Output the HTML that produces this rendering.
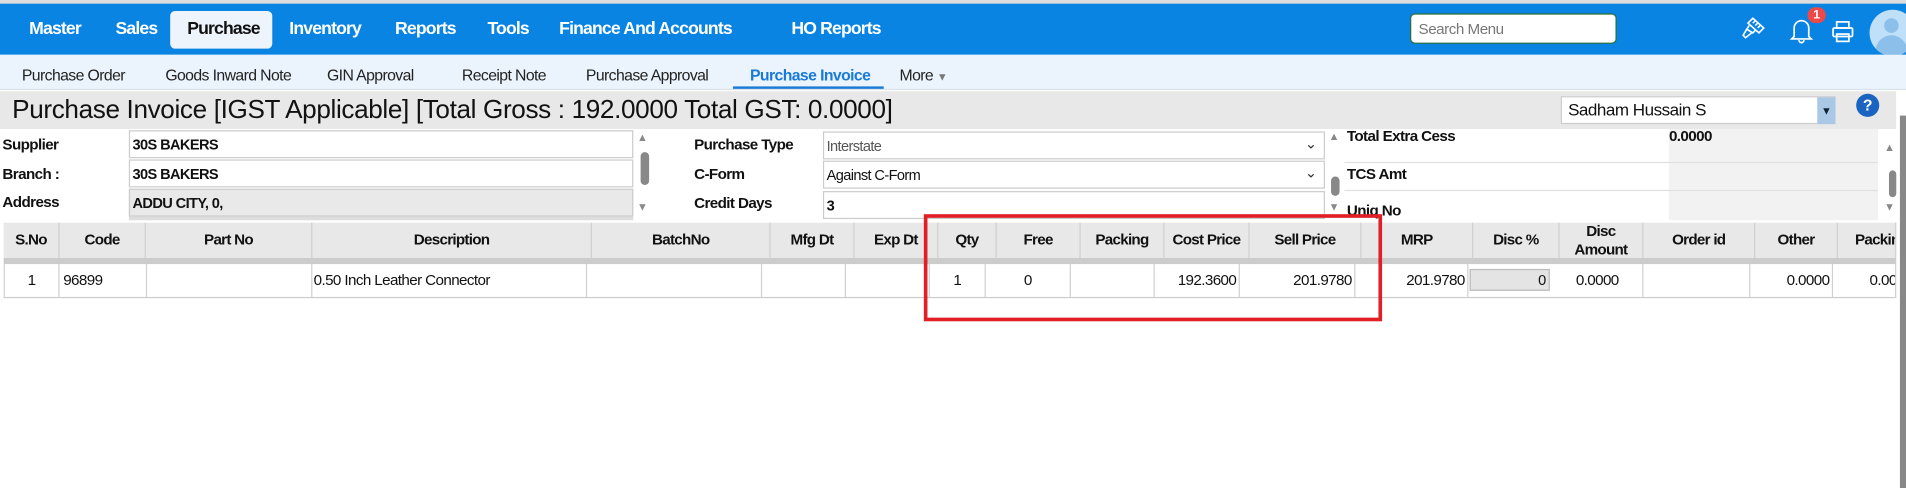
<!DOCTYPE html>
<html><head><meta charset="utf-8"><style>
*{box-sizing:border-box;margin:0;padding:0}
html,body{width:1906px;height:488px;overflow:hidden;background:#fff}
#w{position:absolute;left:0;top:0;width:1568px;height:401px;transform:scale(1.21556,1.21696);transform-origin:0 0;font-family:"Liberation Sans",sans-serif;color:#111}
.a{position:absolute;white-space:nowrap}
.nav{left:0;top:3px;width:1568px;height:42px;background:#0a84e3}
.ni{color:#fff;font-weight:bold;font-size:14.5px;top:16px;letter-spacing:-0.7px}
.sub{left:0;top:45px;width:1568px;height:29px;background:#ebf4fc;border-bottom:1px solid #d8e2ea}
.si{font-size:13px;top:54px;color:#222;letter-spacing:-0.5px}
.lbl{font-size:12.5px;font-weight:bold;letter-spacing:-0.5px}
.inp{border:1px solid #ccc;background:#fff;font-size:12px;font-weight:bold;padding:4px 0 0 2px;letter-spacing:-0.5px}
.th{position:absolute;top:183px;height:29px;border-right:1px solid #d0d0d0;font-size:12.5px;font-weight:bold;text-align:center;line-height:29px;letter-spacing:-0.6px}
.td{position:absolute;top:217px;height:27px;border-right:1px solid #d0d0d0;font-size:12.5px;line-height:27px;letter-spacing:-0.5px}
</style></head><body><div id="w">
<div class="a" style="left:0;top:0;width:1568px;height:3px;background:#ddd"></div>
<div class="a nav"></div>
<div class="a" style="left:140px;top:9px;width:84px;height:31px;background:#eef4fb;border-radius:4px"></div>
<div class="a ni" style="left:24px">Master</div>
<div class="a ni" style="left:95px">Sales</div>
<div class="a ni" style="left:154px;color:#111">Purchase</div>
<div class="a ni" style="left:238px">Inventory</div>
<div class="a ni" style="left:325px">Reports</div>
<div class="a ni" style="left:401px">Tools</div>
<div class="a ni" style="left:460px">Finance And Accounts</div>
<div class="a ni" style="left:651px">HO Reports</div>
<div class="a" style="left:1160px;top:11px;width:170px;height:25px;background:#fff;border:1px solid #2b6e3a;border-radius:4px;font-size:12.5px;color:#777;padding:5px 0 0 6px;letter-spacing:-0.4px">Search Menu</div>
<svg class="a" style="left:1432px;top:12px" width="22" height="24" viewBox="0 0 22 24" fill="none" stroke="#fff" stroke-width="1.3"><path d="M10 3l9 8-4 4-9-8z"/><path d="M12 5l-2 2M14 7l-2 2M16 9l-2 2"/><path d="M7 9l-2 3 5 3 2-2"/><path d="M5 12l-3 5 2 2 5-4"/></svg>
<svg class="a" style="left:1472px;top:14px" width="20" height="22" viewBox="0 0 20 22" fill="none" stroke="#fff" stroke-width="1.4"><path d="M4 16V9a6 6 0 0112 0v7l2 2H2z"/><path d="M8 19a2 2 0 004 0"/></svg>
<div class="a" style="left:1487px;top:6px;width:15px;height:13px;border-radius:7px;background:#f04848;color:#fff;font-size:10px;font-weight:bold;text-align:center;line-height:13px">1</div>
<svg class="a" style="left:1506px;top:16px" width="20" height="20" viewBox="0 0 20 20" fill="none" stroke="#fff" stroke-width="1.4"><rect x="5" y="2" width="10" height="5"/><rect x="2" y="7" width="16" height="7" rx="1"/><rect x="5" y="12" width="10" height="6"/></svg>
<div class="a" style="left:1538px;top:8px;width:38px;height:38px;border-radius:50%;background:#bfe0f8;overflow:hidden"><div class="a" style="left:12px;top:7px;width:12px;height:12px;border-radius:50%;background:#8cc0ea"></div><div class="a" style="left:5px;top:21px;width:26px;height:20px;border-radius:13px 13px 0 0;background:#8cc0ea"></div></div>
<div class="a sub"></div>
<div class="a si" style="left:18px">Purchase Order</div>
<div class="a si" style="left:136px">Goods Inward Note</div>
<div class="a si" style="left:269px">GIN Approval</div>
<div class="a si" style="left:380px">Receipt Note</div>
<div class="a si" style="left:482px">Purchase Approval</div>
<div class="a si" style="left:617px;color:#1a7ad8;font-weight:bold">Purchase Invoice</div>
<div class="a" style="left:603px;top:71px;width:124px;height:2px;background:#1a7ad8"></div>
<div class="a si" style="left:740px">More <span style="font-size:9px;color:#777">▼</span></div>
<div class="a" style="left:0;top:75px;width:1560px;height:31px;background:#e8e8e8"></div>
<div class="a" style="left:10px;top:78px;font-size:21.5px;color:#111;letter-spacing:-0.3px">Purchase Invoice [IGST Applicable] [Total Gross : 192.0000 Total GST: 0.0000]</div>
<div class="a" style="left:1284px;top:79px;width:226px;height:23px;background:#fff;border:1px solid #ccc;font-size:14px;padding:2px 0 0 5px;letter-spacing:-0.4px">Sadham Hussain S</div>
<div class="a" style="left:1495px;top:80px;width:15px;height:22px;background:#a9c8e6;color:#123;font-size:9px;text-align:center;line-height:22px">▼</div>
<div class="a" style="left:1527px;top:77px;width:19px;height:19px;border-radius:50%;background:#1b63c0;color:#fff;font-weight:bold;font-size:13px;text-align:center;line-height:19px">?</div>
<div class="a" style="left:1560px;top:75px;width:8px;height:326px;background:#fff"></div>
<div class="a" style="left:1563px;top:95px;width:5px;height:306px;background:#888"></div>
<!-- form -->
<div class="a lbl" style="left:2px;top:112px">Supplier</div>
<div class="a lbl" style="left:2px;top:136px">Branch :</div>
<div class="a lbl" style="left:2px;top:159px">Address</div>
<div class="a inp" style="left:106px;top:107px;width:415px;height:23px">30S BAKERS</div>
<div class="a inp" style="left:106px;top:131px;width:415px;height:23px">30S BAKERS</div>
<div class="a inp" style="left:106px;top:155px;width:415px;height:23px;background:#e9e9e9">ADDU CITY, 0,</div>
<div class="a" style="left:106px;top:178px;width:415px;height:3px;background:#ddd"></div>
<div class="a" style="left:524px;top:108px;font-size:9px;color:#888">▲</div>
<div class="a" style="left:527px;top:125px;width:7px;height:27px;background:#888;border-radius:4px"></div>
<div class="a" style="left:524px;top:165px;font-size:9px;color:#888">▼</div>
<div class="a" style="left:538px;top:106px;width:552px;height:75px;background:#fff"></div>
<div class="a lbl" style="left:571px;top:112px">Purchase Type</div>
<div class="a lbl" style="left:571px;top:136px">C-Form</div>
<div class="a lbl" style="left:571px;top:160px">Credit Days</div>
<div class="a inp" style="left:677px;top:108px;width:413px;height:23px;font-weight:normal;color:#555">Interstate<span style="position:absolute;right:6px;top:2px;color:#333">⌄</span></div>
<div class="a inp" style="left:677px;top:132px;width:413px;height:23px;font-weight:normal">Against C-Form<span style="position:absolute;right:6px;top:2px;color:#333">⌄</span></div>
<div class="a inp" style="left:677px;top:157px;width:413px;height:23px;font-weight:bold">3</div>
<div class="a" style="left:1093px;top:107px;font-size:9px;color:#888">▲</div>
<div class="a" style="left:1095px;top:145px;width:7px;height:16px;background:#888;border-radius:4px"></div>
<div class="a" style="left:1093px;top:165px;font-size:9px;color:#888">▼</div>
<div class="a" style="left:1106px;top:106px;width:267px;height:75px;background:#fff"></div>
<div class="a" style="left:1373px;top:106px;width:172px;height:75px;background:#f2f2f2"></div>
<div class="a" style="left:1106px;top:133px;width:439px;height:1px;background:#e0e0e0"></div>
<div class="a" style="left:1106px;top:156px;width:439px;height:1px;background:#e0e0e0"></div>
<div class="a lbl" style="left:1108px;top:105px">Total Extra Cess</div>
<div class="a lbl" style="left:1373px;top:105px">0.0000</div>
<div class="a lbl" style="left:1108px;top:136px">TCS Amt</div>
<div class="a lbl" style="left:1108px;top:166px">Uniq No</div>
<div class="a" style="left:1550px;top:116px;font-size:9px;color:#888">▲</div>
<div class="a" style="left:1554px;top:140px;width:6px;height:22px;background:#888;border-radius:3px"></div>
<div class="a" style="left:1550px;top:165px;font-size:9px;color:#888">▼</div>
<!-- table -->
<div class="a" style="left:3px;top:183px;width:1557px;height:29px;background:#e8e8e8"></div>
<div class="a" style="left:3px;top:212px;width:1557px;height:5px;background:#cccccc"></div>
<div class="a" style="left:3px;top:244px;width:1557px;height:1px;background:#ccc"></div>
<div class="th" style="left:3px;width:46px">S.No</div>
<div class="th" style="left:49px;width:71px">Code</div>
<div class="th" style="left:120px;width:137px">Part No</div>
<div class="th" style="left:257px;width:230px">Description</div>
<div class="th" style="left:487px;width:147px">BatchNo</div>
<div class="th" style="left:634px;width:69px">Mfg Dt</div>
<div class="th" style="left:703px;width:69px">Exp Dt</div>
<div class="th" style="left:772px;width:48px">Qty</div>
<div class="th" style="left:820px;width:69px">Free</div>
<div class="th" style="left:889px;width:69px">Packing</div>
<div class="th" style="left:958px;width:70px">Cost Price</div>
<div class="th" style="left:1028px;width:92px">Sell Price</div>
<div class="th" style="left:1120px;width:92px">MRP</div>
<div class="th" style="left:1212px;width:71px">Disc %</div>
<div class="th" style="left:1283px;width:69px;line-height:15px;padding-top:0">Disc<br>Amount</div>
<div class="th" style="left:1352px;width:92px">Order id</div>
<div class="th" style="left:1444px;width:68px">Other</div>
<div class="th" style="left:1512px;width:48px;text-align:left;padding-left:14px;overflow:hidden">Packing</div>
<div class="td" style="left:3px;width:46px;text-align:center;border-left:1px solid #d0d0d0">1</div>
<div class="td" style="left:49px;width:72px;padding-left:3px">96899</div>
<div class="td" style="left:121px;width:136px"></div>
<div class="td" style="left:257px;width:226px;padding-left:1px">0.50 Inch Leather Connector</div>
<div class="td" style="left:483px;width:144px"></div>
<div class="td" style="left:627px;width:69px"></div>
<div class="td" style="left:696px;width:69px"></div>
<div class="td" style="left:765px;width:46px;text-align:center">1</div>
<div class="td" style="left:811px;width:70px;text-align:center">0</div>
<div class="td" style="left:881px;width:69px"></div>
<div class="td" style="left:950px;width:70px;text-align:right;padding-right:2px">192.3600</div>
<div class="td" style="left:1020px;width:95px;text-align:right;padding-right:2px">201.9780</div>
<div class="td" style="left:1115px;width:93px;text-align:right;padding-right:2px">201.9780</div>
<div class="a" style="left:1209px;top:221px;width:66px;height:18px;background:#e4e4e4;border:1px solid #bbb;font-size:12px;text-align:right;padding-right:2px;line-height:16px">0</div>
<div class="td" style="left:1277px;width:75px;text-align:center">0.0000</div>
<div class="td" style="left:1352px;width:88px"></div>
<div class="td" style="left:1440px;width:68px;text-align:right;padding-right:2px">0.0000</div>
<div class="td" style="left:1508px;width:52px;padding-left:30px;overflow:hidden">0.00</div>
<div class="a" style="left:760px;top:176px;width:377px;height:88px;border:3px solid #e01f26"></div>
</div></body></html>
